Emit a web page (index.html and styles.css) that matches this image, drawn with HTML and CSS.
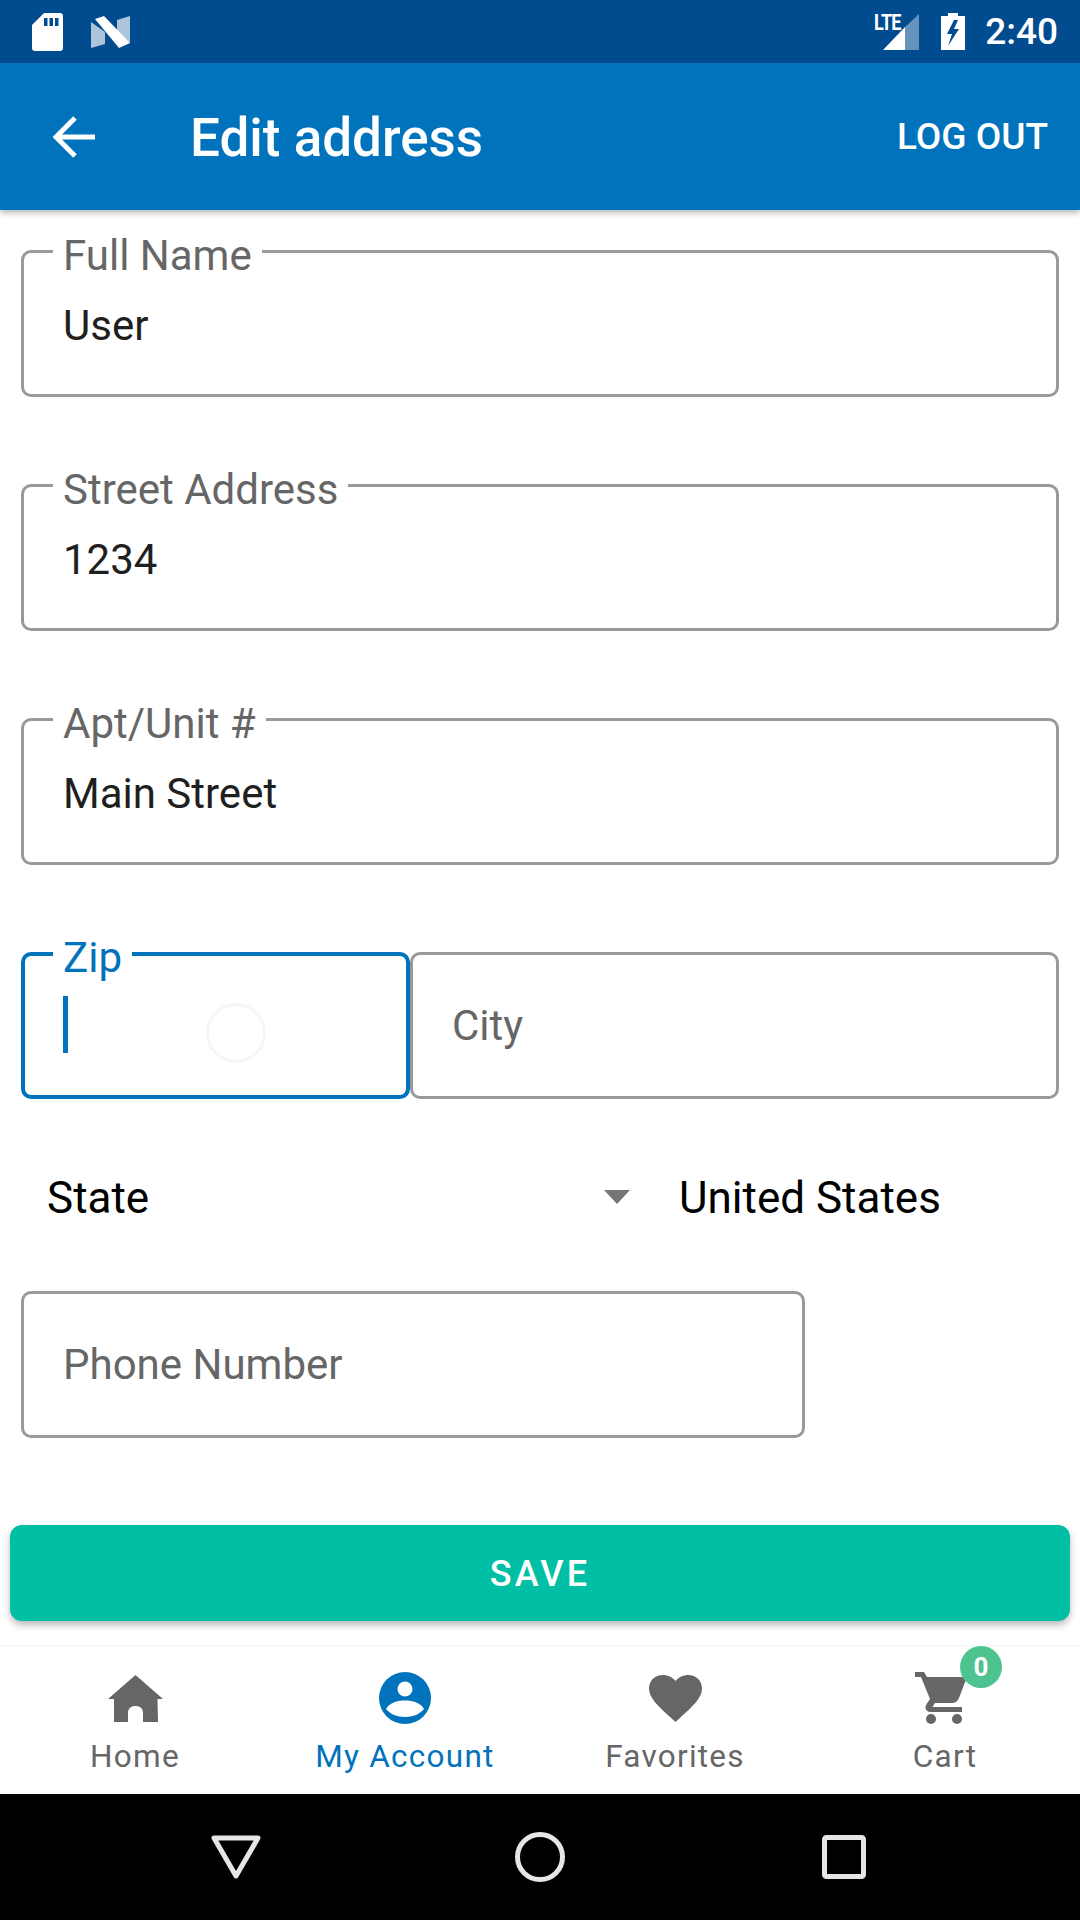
FILE: index.html
```html
<!DOCTYPE html>
<html lang="en">
<head>
<meta charset="utf-8">
<title>Edit address</title>
<link rel="stylesheet" href="styles.css">
</head>
<body>
<div class="screen">
  <div class="statusbar">
    <div class="status-left">
      <svg class="ic-sd" viewBox="0 0 31 38"><path fill="#fff" d="M12 0H28a3 3 0 0 1 3 3V35a3 3 0 0 1-3 3H3a3 3 0 0 1-3-3V12Z"/><path fill="#004c8f" d="M12 5h3.500v8H12zM17.500 5H21v8h-3.500zM23 5h3.500v8H23z"/></svg>
      <svg class="ic-n" viewBox="0 0 39 32"><path fill="#fff" fill-opacity=".68" d="M0 6 14 16V28L0 32Z"/><path fill="#fff" fill-opacity=".68" d="M39 0V27L26 16V4Z"/><path fill="#fff" d="M4 3 13 0 39 27 28 32Z"/></svg>
    </div>
    <div class="status-right">
      <div class="signal">
        <span class="lte">LTE</span>
        <svg class="ic-signal" viewBox="0 0 36 36"><path fill="#fff" fill-opacity=".4" d="M36 0V36H22V13Z"/><path fill="#fff" d="M22 13V36H0Z"/></svg>
      </div>
      <svg class="ic-batt" viewBox="0 0 24 37"><path fill="#fff" d="M7 0H17V3H24V37H0V3H7Z"/><path fill="#004c8f" d="M13 7 6 21H11L7 33 18 16H13L17 7Z"/></svg>
      <span class="clock">2:40</span>
    </div>
  </div>

  <header class="appbar">
    <svg class="ic-back" viewBox="0 0 42 42"><path fill="none" stroke="#fff" stroke-width="5" d="M42 21H4M22 2 3 21 22 40"/></svg>
    <h1 class="title">Edit address</h1>
    <span class="logout">LOG OUT</span>
  </header>

  <main class="form">
    <div class="field">
      <span class="float-label">Full Name</span>
      <span class="value">User</span>
    </div>
    <div class="field">
      <span class="float-label">Street Address</span>
      <span class="value">1234</span>
    </div>
    <div class="field">
      <span class="float-label">Apt/Unit #</span>
      <span class="value">Main Street</span>
    </div>
    <div class="row-zip">
      <div class="field field-zip">
        <span class="float-label float-label-focus">Zip</span>
        <span class="cursor"></span>
        <span class="ripple"></span>
      </div>
      <div class="field field-city">
        <span class="placeholder">City</span>
      </div>
    </div>
    <div class="row-state">
      <div class="state-select">
        <span>State</span>
        <span class="caret"></span>
      </div>
      <span class="country">United States</span>
    </div>
    <div class="field field-phone">
      <span class="placeholder">Phone Number</span>
    </div>
    <button class="save" type="button">SAVE</button>
  </main>

  <nav class="tabs">
    <div class="tab">
      <svg class="tab-ic ic-home" viewBox="0 0 55 47"><path fill="#666" d="M27.500 0 55 24H49.500L50 47H35V38C35 33.500 32 31 27.500 31S20 33.500 20 38V47H6L6 24H0Z"/></svg>
      <span>Home</span>
    </div>
    <div class="tab tab-active">
      <svg class="tab-ic ic-account" viewBox="0 0 52 52"><circle cx="26" cy="26" r="26" fill="#0073bc"/><circle cx="26" cy="17" r="7.500" fill="#fff"/><path fill="#fff" d="M7 37C10 31 18 28.500 26 28.500S42 31 45 37C41 42 34 45 26 45S11 42 7 37Z"/></svg>
      <span>My Account</span>
    </div>
    <div class="tab">
      <svg class="tab-ic ic-heart" viewBox="0 0 53 47"><path fill="#666" d="M26.500 47 22.700 43.500C9 31 0 23 0 13.500 0 5.800 6 0 13.800 0 18.200 0 23.400 2 26.500 6 29.600 2 34.800 0 39.200 0 47 0 53 5.800 53 13.500 53 23 44 31 30.300 43.500Z"/></svg>
      <span>Favorites</span>
    </div>
    <div class="tab">
      <div class="cart-wrap">
        <svg class="tab-ic ic-cart" viewBox="0 0 52 52"><path fill="#666" d="M0 0H9L12 5H52L44 26C43 29 40 31 37 31H20L17.500 35H47V40H15C11.500 40 9.500 36 11 33L15 27 6 5H0Z"/><circle cx="16" cy="47" r="5" fill="#666"/><circle cx="42" cy="47" r="5" fill="#666"/></svg>
        <span class="badge">0</span>
      </div>
      <span>Cart</span>
    </div>
  </nav>

  <div class="sysnav">
    <svg class="ic-sys ic-tri" viewBox="0 0 50 44"><path fill="none" stroke="#e6e6e6" stroke-width="5" stroke-linejoin="round" d="M3 3H47L25 41Z"/></svg>
    <svg class="ic-sys ic-circle" viewBox="0 0 50 50"><circle cx="25" cy="25" r="22.500" fill="none" stroke="#e6e6e6" stroke-width="5"/></svg>
    <svg class="ic-sys ic-square" viewBox="0 0 44 44"><rect x="2.500" y="2.500" width="39" height="39" rx="2" fill="none" stroke="#e6e6e6" stroke-width="5"/></svg>
  </div>
</div>
</body>
</html>
```

FILE: styles.css
```css
* { box-sizing: border-box; }

html, body {
  margin: 0;
  padding: 0;
  background: #fff;
}

.screen {
  width: 1080px;
  height: 1920px;
  display: flex;
  flex-direction: column;
  overflow: hidden;
  font-family: Roboto, "Noto Sans", sans-serif;
}

.statusbar {
  height: 63px;
  flex: none;
  background: #004c8f;
  display: flex;
  align-items: center;
  justify-content: space-between;
  padding: 0 22px 0 32px;
}

.status-left {
  display: flex;
  align-items: center;
  gap: 28px;
}

.ic-sd { width: 31px; height: 38px; display: block; }
.ic-n { width: 39px; height: 32px; display: block; }

.status-right {
  display: flex;
  align-items: center;
}

.signal {
  position: relative;
  width: 45px;
  height: 36px;
  margin-right: 22px;
}

.lte {
  position: absolute;
  left: 0;
  top: -1px;
  color: #fff;
  font-size: 22px;
  line-height: 20px;
  font-weight: 700;
  letter-spacing: -1px;
  transform: scaleX(.82);
  transform-origin: left center;
}

.ic-signal {
  position: absolute;
  right: 0;
  top: 0;
  width: 36px;
  height: 36px;
}

.ic-batt { width: 24px; height: 37px; display: block; margin-right: 20px; }

.clock {
  color: #fff;
  font-size: 37px;
  line-height: 44px;
  font-weight: 500;
}

.appbar {
  height: 147px;
  flex: none;
  background: #0073bc;
  display: flex;
  align-items: center;
  padding: 0 32px 0 53px;
  position: relative;
  z-index: 1;
  box-shadow: 0 3px 6px rgba(0, 0, 0, .28);
}

.ic-back { width: 42px; height: 42px; display: block; margin-right: 95px; }

.title {
  margin: 0;
  flex: 1;
  color: #fff;
  font-size: 53px;
  line-height: 62px;
  font-weight: 500;
  position: relative;
  top: 1px;
}

.logout {
  color: #fff;
  font-size: 37px;
  line-height: 44px;
  font-weight: 500;
}

.form {
  flex: none;
  display: flex;
  flex-direction: column;
  padding: 40px 10px 24px;
}

.field {
  position: relative;
  height: 147px;
  margin: 0 11px 87px;
  border: 3px solid #999;
  border-radius: 10px;
  display: flex;
  align-items: center;
  padding: 0 38px 0 39px;
  font-size: 42px;
  line-height: 48px;
}

.float-label {
  position: absolute;
  left: 29px;
  top: -17px;
  padding: 0 10px;
  background: #fff;
  color: #666;
  font-size: 42px;
  line-height: 40px;
}

.float-label-focus { color: #0073bc; }

.value {
  color: #1f1f1f;
  position: relative;
  top: 2px;
}

.placeholder { color: #666; }

.row-zip {
  display: flex;
  margin: 0 11px 63px;
}

.field-zip {
  width: 389px;
  margin: 0;
  border: 4px solid #0073bc;
}

.field-zip .float-label { left: 28px; top: -18px; }

.field-city {
  flex: 1;
  margin: 0;
}

.cursor {
  width: 5px;
  height: 57px;
  background: #0073bc;
  position: absolute;
  left: 38px;
  top: 40px;
}

.ripple {
  position: absolute;
  left: 181px;
  top: 47px;
  width: 60px;
  height: 60px;
  border-radius: 50%;
  border: 3px solid #f5f5fa;
}

.row-state {
  height: 68px;
  display: flex;
  align-items: center;
  margin-bottom: 61px;
  font-size: 44px;
  line-height: 50px;
  color: #000;
}

.state-select {
  width: 620px;
  padding: 0 0 0 37px;
  display: flex;
  align-items: center;
  justify-content: space-between;
}

.state-select > span:first-child, .country {
  position: relative;
  top: 2px;
}

.caret {
  width: 0;
  height: 0;
  border-left: 13px solid transparent;
  border-right: 13px solid transparent;
  border-top: 14px solid #757575;
  position: relative;
  top: 1px;
}

.country { margin-left: 49px; }

.field-phone {
  width: 784px;
  margin-bottom: 87px;
}

.save {
  width: 1060px;
  height: 96px;
  flex: none;
  border: 0;
  border-radius: 12px;
  background: #00bfa5;
  padding: 2px 0 0;
  color: #fff;
  font-family: inherit;
  font-size: 36px;
  font-weight: 500;
  letter-spacing: 3.200px;
  box-shadow: 0 4px 7px rgba(0, 0, 0, .28);
}

.tabs {
  height: 149px;
  flex: none;
  display: grid;
  grid-template-columns: repeat(4, 1fr);
  border-top: 2px solid #f6f6f6;
  background: #fff;
}

.tab {
  display: flex;
  flex-direction: column;
  align-items: center;
  padding-top: 25px;
  color: #666;
  font-size: 31.500px;
  line-height: 36px;
  letter-spacing: 1.260px;
}

.tab-active { color: #0073bc; }

.tab-ic {
  display: block;
  height: 52px;
  margin-bottom: 15px;
}

.ic-home, .ic-heart {
  height: 47px;
  margin-top: 3px;
  margin-bottom: 17px;
}

.ic-home { width: 55px; }
.ic-account { width: 52px; }
.ic-heart { width: 53px; }
.ic-cart { width: 52px; }

.cart-wrap {
  position: relative;
  margin-right: 8px;
}

.badge {
  position: absolute;
  left: 45px;
  top: -26px;
  width: 42px;
  height: 42px;
  border-radius: 50%;
  background: #4fc38f;
  color: #fff;
  display: flex;
  align-items: center;
  justify-content: center;
  font-size: 26px;
  font-weight: 700;
  letter-spacing: 0;
}

.sysnav {
  height: 126px;
  flex: none;
  background: #000;
  display: grid;
  grid-template-columns: repeat(3, 304px);
  justify-content: center;
  align-items: center;
  justify-items: center;
}

.ic-sys { display: block; }
.ic-tri { width: 50px; height: 44px; }
.ic-circle { width: 50px; height: 50px; }
.ic-square { width: 44px; height: 44px; }
```
